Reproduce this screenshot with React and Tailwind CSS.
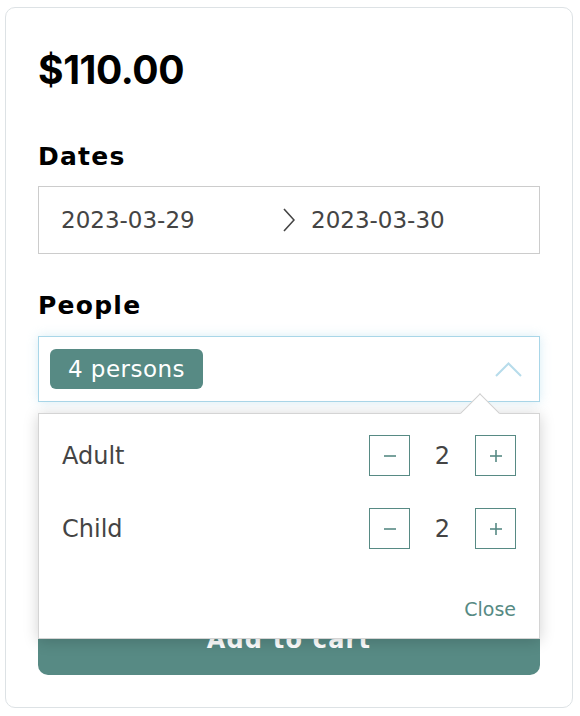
import React from 'react'

const BODY = { fontFamily: '"DejaVu Sans", Inter, sans-serif' }
const PRICE = { fontFamily: 'Inter, "DejaVu Sans", sans-serif' }

function Stepper({ label, value }) {
  return (
    <div className="flex items-center h-[41px]">
      <span className="flex-1 text-[24px] text-[#444]">{label}</span>
      <button className="w-[41px] h-[41px] border border-[#578a84] flex items-center justify-center">
        <svg width="14" height="14" viewBox="0 0 14 14">
          <line x1="1" y1="7" x2="13" y2="7" stroke="#578a84" strokeWidth="1.6" />
        </svg>
      </button>
      <span className="w-[65px] text-center text-[24px] text-[#444]">{value}</span>
      <button className="w-[41px] h-[41px] border border-[#578a84] flex items-center justify-center">
        <svg width="14" height="14" viewBox="0 0 14 14">
          <line x1="1" y1="7" x2="13" y2="7" stroke="#578a84" strokeWidth="1.6" />
          <line x1="7" y1="1" x2="7" y2="13" stroke="#578a84" strokeWidth="1.6" />
        </svg>
      </button>
    </div>
  )
}

export default function App() {
  return (
    <div className="w-[580px] h-[716px] bg-white pt-[7px]" style={BODY}>
      <div className="ml-[5px] w-[568px] h-[701px] border border-[#dde2e5] rounded-[10px] px-[32px] pt-[42px]">
        {/* Price */}
        <div className="h-[40px] leading-[40px] text-[39px] font-bold text-black tracking-[-0.01em]" style={PRICE}>
          $110.00
        </div>

        {/* Dates */}
        <div className="mt-[52px] h-[30px] leading-[30px] text-[25px] font-bold text-black tracking-[0.05em]">Dates</div>
        <div className="mt-[14px] h-[68px] border border-[#cccccc] flex items-center pl-[22px] text-[23px] text-[#444]">
          <span className="w-[222px]">2023-03-29</span>
          <svg width="12" height="24" viewBox="0 0 12 24" className="shrink-0">
            <polyline points="1,1 11,12 1,23" fill="none" stroke="#444" strokeWidth="1.6" />
          </svg>
          <span className="ml-[16px]">2023-03-30</span>
        </div>

        {/* People */}
        <div className="mt-[37px] h-[30px] leading-[30px] text-[25px] font-bold text-black tracking-[0.05em]">People</div>
        <div className="relative mt-[15px]">
          <div className="h-[66px] border border-[#a9d6e8] shadow-[0_0_10px_rgba(169,214,232,0.45)] flex items-center pl-[11px] pr-[17px]">
            <span className="w-[153px] h-[40px] pl-[18px] rounded-[6px] bg-[#578a84] text-white text-[23px] flex items-center tracking-[0.02em]">
              4 persons
            </span>
            <div className="flex-1" />
            <svg width="27" height="15" viewBox="0 0 27 15">
              <polyline points="1,14 13.5,1.5 26,14" fill="none" stroke="#b7dceb" strokeWidth="2" />
            </svg>
          </div>

          {/* Dropdown */}
          <div className="absolute left-0 right-0 top-[77px] h-[226px] bg-white border border-[#d4d4d4] shadow-[0_2px_14px_rgba(0,0,0,0.18)] z-10 px-[23px] pt-[21px]">
            <div className="absolute left-[427px] top-[-15px] w-[28px] h-[28px] bg-white border-t border-l border-[#d0d0d0] rotate-45" />
            <div className="relative">
              <Stepper label="Adult" value={2} />
              <div className="h-[32px]" />
              <Stepper label="Child" value={2} />
              <div className="mt-[46px] text-right text-[19px] text-[#578a84]">Close</div>
            </div>
          </div>
        </div>

        {/* Add to cart */}
        <button className="mt-[203px] w-full h-[70px] rounded-b-[10px] rounded-t-[4px] bg-[#578a84] text-white text-[24px] font-bold tracking-[0.05em]">
          Add to cart
        </button>
      </div>
    </div>
  )
}
